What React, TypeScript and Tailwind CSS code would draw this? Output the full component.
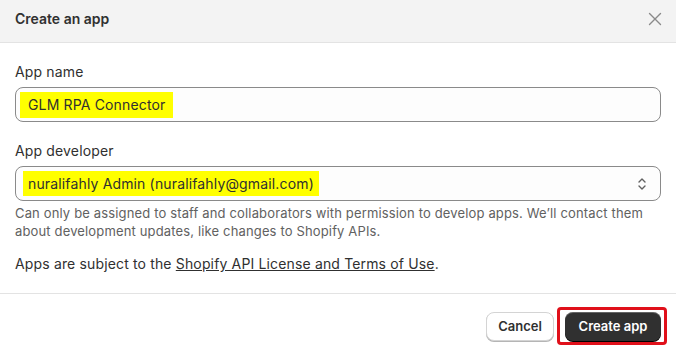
import React from "react";

export default function App() {
  return (
    <div
      className="w-[676px] h-[354px] bg-white text-[#303030] overflow-hidden"
      style={{ fontFamily: "Inter, 'Noto Sans', sans-serif" }}
    >
      <div className="h-[43px] bg-[#f3f3f3] border-b border-[#e3e3e3] flex items-center justify-between pl-[15px] pr-[14px]">
        <div className="text-[14px] font-semibold leading-5 pb-[5px]">Create an app</div>
        <svg width="14" height="14" viewBox="0 0 14 14" className="mb-[5px]">
          <path d="M1.5 1.5 L12.5 12.5 M12.5 1.5 L1.5 12.5" stroke="#8a8a8a" strokeWidth="1.4" strokeLinecap="round" />
        </svg>
      </div>

      <div className="px-[15px] pt-[19px] pb-[19px] border-b border-[#e3e3e3] tracking-[0.15px]">
        <div className="text-[14px] leading-5">App name</div>
        <div className="mt-[5px] h-[35px] rounded-[8px] border border-[#8a8a8a] bg-[#fdfdfd] flex items-center pl-[4px]">
          <span className="bg-[#ffff00] text-[14px] leading-[26px] px-[8px]">GLM RPA Connector</span>
        </div>

        <div className="mt-[19px] text-[14px] leading-5">App developer</div>
        <div className="mt-[5px] h-[35px] rounded-[8px] border border-[#8a8a8a] bg-[#fdfdfd] flex items-center justify-between pl-[7px] pr-[13px]">
          <span className="bg-[#ffff00] text-[14px] leading-[25px] px-[5px]">nuralifahly Admin (nuralifahly@gmail.com)</span>
          <svg width="10" height="14" viewBox="0 0 10 14">
            <path d="M2 5 L5 2 L8 5 M2 9 L5 12 L8 9" fill="none" stroke="#616161" strokeWidth="1.4" strokeLinecap="round" strokeLinejoin="round" />
          </svg>
        </div>
        <div className="mt-[3px] text-[13px] leading-[18px] text-[#616161] pr-[10px]">
          Can only be assigned to staff and collaborators with permission to develop apps. We’ll contact them about development updates, like changes to Shopify APIs.
        </div>

        <div className="mt-[14px] text-[14px] leading-5">
          Apps are subject to the <span className="underline">Shopify API License and Terms of Use</span>.
        </div>
      </div>

      <div className="flex justify-end items-center gap-[11px] pr-[15px] pt-[18px]">
        <button className="h-[29px] w-[68px] rounded-[8px] bg-white border border-[#d4d4d4] shadow-[0_1px_0_#b5b5b5] text-[13px] font-semibold text-[#303030]">
          Cancel
        </button>
        <div className="relative">
          <button className="h-[29px] w-[96px] rounded-[8px] bg-[#303030] shadow-[inset_0_1px_0_rgba(255,255,255,0.25),0_1px_0_#000] text-[13px] font-semibold text-white">
            Create app
          </button>
          <div className="absolute left-[-8px] right-[-6px] top-[-5px] bottom-[-4px] border-[3px] border-[#e0101a] rounded-[4px]" />
        </div>
      </div>
    </div>
  );
}
